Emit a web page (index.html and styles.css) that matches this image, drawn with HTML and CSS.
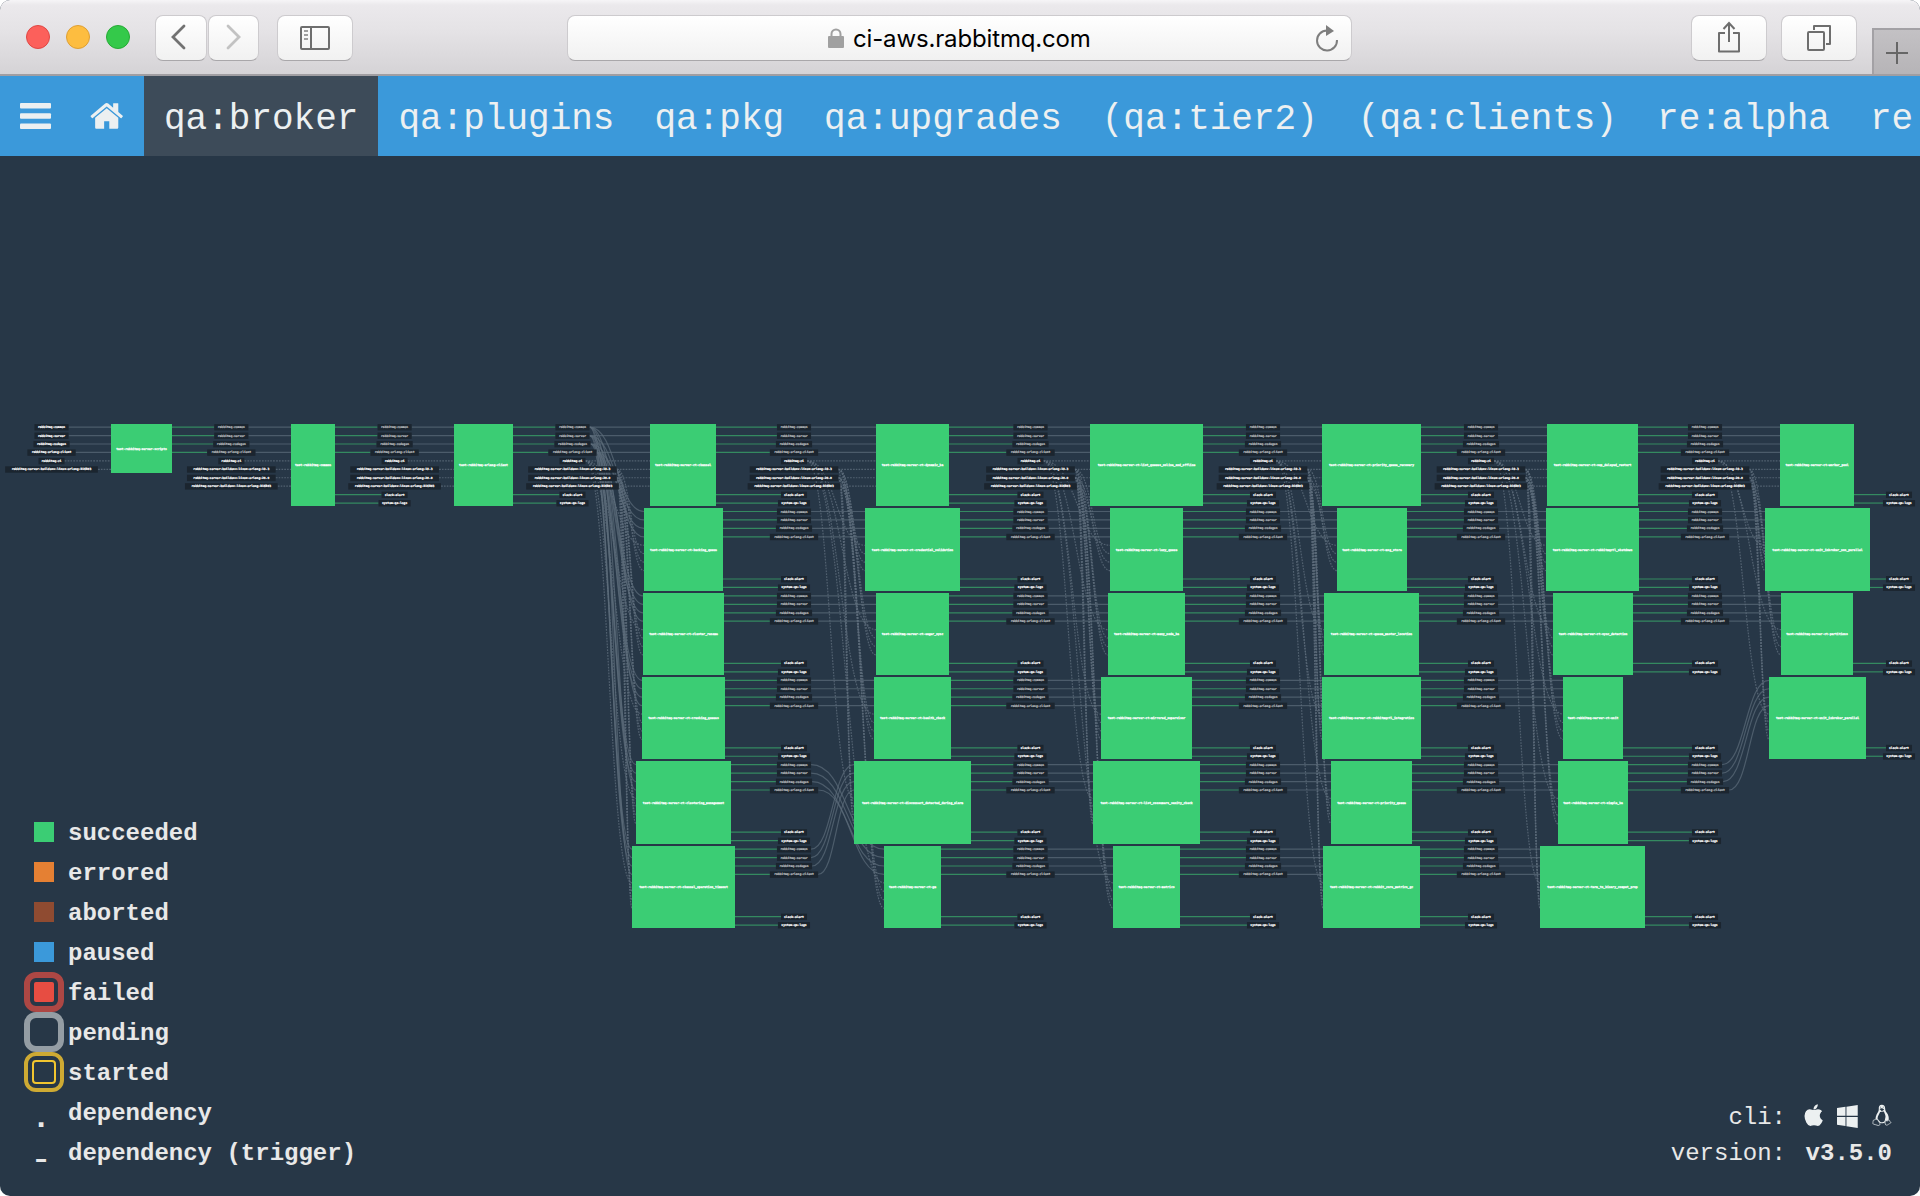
FILE: index.html
```html
<!DOCTYPE html>
<html lang="en">
<head>
<meta charset="utf-8">
<title>qa:broker - Concourse</title>
<link rel="stylesheet" href="styles.css">
</head>
<body>
<div class="window">
  <header class="toolbar">
    <div class="lights"><span class="light close"></span><span class="light minimize"></span><span class="light zoom"></span></div>
    <div class="history">
      <div class="button back"><svg width="16" height="26" viewBox="0 0 16 26"><path d="M14 2 3 13l11 11" fill="none" stroke="#727272" stroke-width="2.8" stroke-linecap="round"/></svg></div>
      <div class="button forward"><svg width="16" height="26" viewBox="0 0 16 26"><path d="m2 2 11 11L2 24" fill="none" stroke="#c2c2c2" stroke-width="2.8" stroke-linecap="round"/></svg></div>
    </div>
    <div class="button sidebar"><svg width="30" height="24" viewBox="0 0 30 24" fill="none" stroke="#6e6e6e" stroke-width="2"><rect x="1" y="1" width="28" height="22" rx="1"/><path d="M11 1v22"/><path d="M4 5h4M4 9h4M4 13h4" stroke="#a0a0a0"/></svg></div>
    <div class="button address">
      <svg class="lock" width="16" height="20" viewBox="0 0 16 20"><path d="M3.500 9V6a4.500 4.500 0 0 1 9 0v3" fill="none" stroke="#a0a0a0" stroke-width="2"/><rect x="0" y="8" width="16" height="12" rx="1" fill="#a0a0a0"/></svg>
      <span class="url">ci-aws.rabbitmq.com</span>
      <svg class="reload" width="24" height="28" viewBox="0 0 24 28"><path d="M12 6.500a10 10 0 1 0 10 9.500" fill="none" stroke="#7e7e7e" stroke-width="2"/><path d="m11 1 8 6-8 5z" fill="#7e7e7e"/></svg>
    </div>
    <div class="button share"><svg width="24" height="32" viewBox="0 0 24 32" fill="none" stroke="#6e6e6e" stroke-width="2"><path d="M8 12H2v18.500h20V12h-6" stroke-linejoin="round"/><path d="M12 21V2M6.500 8 12 2l5.500 6"/></svg></div>
    <div class="button tabs"><svg width="26" height="26" viewBox="0 0 26 26" fill="none" stroke="#6e6e6e" stroke-width="2"><rect x="2" y="7" width="16" height="18" rx="1"/><path d="M8 5V1h16v18h-4" stroke-linejoin="round"/></svg></div>
    <div class="new-tab"><svg width="22" height="22" viewBox="0 0 22 22" stroke="#666" stroke-width="2"><path d="M11 0v22M0 11h22"/></svg></div>
  </header>
  <nav class="groups">
    <a class="icon-link"><svg width="32" height="26" viewBox="0 0 32 26" fill="#ecf0f1"><rect width="31" height="5.500" rx="1"/><rect y="10.300" width="31" height="5.500" rx="1"/><rect y="20.500" width="31" height="5.500" rx="1"/></svg></a>
    <a class="icon-link"><svg class="home" width="36" height="36" viewBox="0 0 1792 1792" fill="#ecf0f1"><path d="M1408 992v480q0 26-19 45t-45 19h-384v-384h-256v384h-384q-26 0-45-19t-19-45v-480q0-1 .5-3t.5-3l575-474 575 474q1 2 1 6zm223-69l-62 74q-8 9-21 11h-3q-13 0-21-7l-692-577-692 577q-12 8-24 7-13-2-21-11l-62-74q-8-10-7-23.500t11-21.500l719-599q32-26 76-26t76 26l244 204v-195q0-14 9-23t23-9h192q14 0 23 9t9 23v408l219 182q10 8 11 21.500t-7 23.500z"/></svg></a>
    <a class="group active">qa:broker</a>
    <a class="group">qa:plugins</a>
    <a class="group">qa:pkg</a>
    <a class="group">qa:upgrades</a>
    <a class="group">(qa:tier2)</a>
    <a class="group">(qa:clients)</a>
    <a class="group">re:alpha</a>
    <a class="group">re</a>
  </nav>
  <main class="pipeline">
    <svg class="graph" id="graph" width="1920" height="1040" viewBox="0 156 1920 1040"></svg>
    <ul class="legend">
      <li><span class="key"><i class="swatch succeeded"></i></span><span class="term">succeeded</span></li>
      <li><span class="key"><i class="swatch errored"></i></span><span class="term">errored</span></li>
      <li><span class="key"><i class="swatch aborted"></i></span><span class="term">aborted</span></li>
      <li><span class="key"><i class="swatch paused"></i></span><span class="term">paused</span></li>
      <li><span class="key ring failed-ring"><i class="swatch failed"></i></span><span class="term">failed</span></li>
      <li><span class="key ring pending-ring"></span><span class="term">pending</span></li>
      <li><span class="key ring started-ring"><i class="started"></i></span><span class="term">started</span></li>
      <li><span class="key mark dot">.</span><span class="term">dependency</span></li>
      <li><span class="key mark dash">-</span><span class="term">dependency (trigger)</span></li>
    </ul>
    <dl class="info">
      <dt>cli:</dt>
      <dd class="platforms">
        <svg width="26" height="26" viewBox="0 0 1792 1792" fill="#ecf0f1"><path d="M1585 1215q-39 125-123 250-129 196-257 196-49 0-140-32-86-32-151-32-61 0-142 33-81 34-132 34-152 0-301-259-147-261-147-503 0-228 113-374 113-144 284-144 72 0 177 30 104 30 138 30 45 0 143-34 102-34 173-34 119 0 213 65 52 36 104 100-79 67-114 118-65 94-65 207 0 124 69 223t158 126zm-376-1173q0 61-29 136-30 75-93 138-54 54-108 72-37 11-104 17 3-149 78-257 74-107 250-148 1 3 2.500 11t2.500 11q0 4 .5 10t.5 10z"/></svg>
        <svg class="windows" width="23" height="23" viewBox="64 136 1664 1664" preserveAspectRatio="none" fill="#ecf0f1"><path d="M746 1006v651l-682-94v-557h682zm0-743v659h-682v-565zm982 743v786l-907-125v-661h907zm0-870v786h-907v-661z"/></svg>
        <svg class="linux" width="22" height="25" viewBox="0 0 22 25"><path d="M11 .7C8 .7 7.400 2.600 7.500 5.500c.1 2.300-1.400 3.800-2.400 6-.7 1.800-1.200 3.500-1.100 5L8 20c1.500 1.600 5 1.600 6.500 0l4-2.500c.5-3-.4-5.600-1.900-7.800-1.300-1.800-2-2.700-2-5C14.500 2 13.400.7 11 .7z" fill="#ecf0f1"/><path d="M9 8.500c-1.200 2.800-3 5-2.800 7.500L9 19.500c1.600 1 3.600.7 5-.5l1-5c0-2.300-1.200-4.600-2-6z" fill="#273747"/><path d="M8.800 5.400 11 4.800l2.200 1.100-2.400 1.500zM9 3.300h1M12 3.300h1" fill="#273747" stroke="#273747" stroke-width=".7"/><path d="M4.300 16.500c-.7 1.300-3.300.5-3.100 2.200.2 1.200-.8 2.700.2 3.300 1.600.4 4.200 1.200 5.500 1.600 1.500.2 2.400-1.200 1.800-2.500-1.200-1.500-2.500-4.900-4.400-4.600zM15 17.500c-.3 2-.9 4.400.2 5.400 1.500 1 2.900-.7 4.200-1.300 1-.5 2.300-.9 1-2-1-.7-.5-1.800-1.600-2.300-1.200 1.700-2.900 1.500-3.800.2z" fill="#273747" stroke="#ecf0f1" stroke-width=".8"/></svg>
      </dd>
      <dt>version:</dt>
      <dd class="version">v3.5.0</dd>
    </dl>
  </main>
</div>
<script src="graph.js"></script>
</body>
</html>
```
FILE: styles.css
```css
* { box-sizing: border-box; }
body { margin: 0; background: #fff; overflow: hidden; }
.window { width: 1920px; height: 1196px; display: flex; flex-direction: column; border-radius: 10px; overflow: hidden; background: #273747; }

.toolbar { flex: none; height: 76px; display: flex; padding-top: 15px; border-bottom: 2px solid #a09ea2; background: linear-gradient(#f6f5f7 0, #ebe9ec 5px, #e5e3e6 30px, #d5d3d6 74px); }
.lights { display: flex; gap: 16px; margin: 10px 25px 0 26px; }
.light { width: 24px; height: 24px; border-radius: 50%; border: 1px solid; }
.close { background: #fc605b; border-color: #df4744; }
.minimize { background: #fdbd40; border-color: #de9f34; }
.zoom { background: #34c94a; border-color: #27aa35; }
.history { display: flex; gap: 1px; }
.button { height: 46px; border: 1px solid #cdcbce; border-bottom-color: #a9a7aa; border-radius: 8px; background: linear-gradient(#fff, #f1f1f1); display: flex; align-items: center; justify-content: center; }
.back { width: 52px; padding-right: 6px; }
.forward { width: 51px; }
.back svg, .forward svg { margin-bottom: 2px; }
.sidebar { width: 76px; margin-left: 18px; }
.share { width: 76px; margin-left: 339px; padding-right: 1px; }
.share svg { margin-bottom: 2px; }
.tabs { width: 76px; margin-left: 14px; padding-right: 1px; }
.address { width: 785px; margin-left: 214px; }
.lock { margin: 0 9px 0 260px; }
.url { flex: 1; font: 24px/46px Inter, sans-serif; letter-spacing: -0.15px; padding-top: 2px; color: #000; }
.reload { margin: 0 12px 1px 0; }
.new-tab { margin: 13px 0 0 15px; flex: 1; border: solid #a3a1a5; border-width: 2px 0 0 2px; background: linear-gradient(#c3c1c4, #b6b4b7); display: flex; padding: 12px 0 0 12px; }

.groups { flex: none; height: 80px; display: flex; overflow: hidden; background: #3b99da; color: #ecf0f1; font: 36px/88px "Liberation Mono", monospace; }
.icon-link { width: 72px; flex: none; display: flex; align-items: center; padding-left: 20px; }
.icon-link .home { margin-left: -2px; }
.icon-link svg { flex: none; }
.group { flex: none; padding: 0 20px; white-space: nowrap; }
.active { background: #3d4b59; }

.pipeline { flex: 1; position: relative; }
.graph { display: block; font-family: "DejaVu Sans Mono", monospace; font-size: 3px; font-weight: bold; text-anchor: middle; text-rendering: geometricPrecision; }
.job { fill: #3bcd74; }
.job-name { fill: #fff; stroke: #fff; stroke-width: .25; }
.resource { fill: #1b252f; }
.resource-name { fill: #fff; stroke: #fff; stroke-width: .2; }
.resource-name.passed { fill: #b4b8bb; stroke: #b4b8bb; }
.edge { fill: none; stroke: #5c6c7b; stroke-opacity: .7; stroke-width: 1.2; }
.trigger { stroke-dasharray: 1.7 1.200; stroke-opacity: .8; }
.output { fill: none; stroke: #348a60; stroke-width: 1.2; }

.legend { position: absolute; left: 24px; bottom: 24px; margin: 0; padding: 0; list-style: none; color: #e8e8e8; font: bold 24px/40px "Liberation Mono", monospace; }
.legend li { height: 40px; display: flex; gap: 4px; }
.term { padding-top: 2px; }
.key { width: 40px; height: 40px; display: flex; align-items: center; justify-content: center; }
.swatch { width: 20px; height: 20px; }
.succeeded { background: #3bcd74; }
.errored { background: #e58033; }
.aborted { background: #8f4b31; }
.paused { background: #3b99da; }
.failed { background: #e74d42; border-radius: 2px; }
.ring { border: 6px solid; border-radius: 12px; }
.failed-ring { border-color: #ad4744; }
.pending-ring { border-color: #949da4; }
.started-ring { border: 4px solid #ceaa33; }
.started { width: 24px; height: 24px; border: 2px solid #f1c52f; border-radius: 4px; }
.mark { padding-right: 6px; }
.dot { padding-top: 14px; font-size: 32px; }
.dash { padding-top: 17px; font-size: 36px; font-weight: normal; }

.info { position: absolute; right: 28px; bottom: 24px; margin: 0; display: grid; grid-template-columns: auto 90px; column-gap: 16px; color: #e8e8e8; font: 24px/36px "Liberation Mono", monospace; text-align: right; }
.info dd { margin: 0; }
.platforms { display: flex; align-items: center; justify-content: flex-end; padding-bottom: 5px; }
.windows { margin: 2px 14px 0 12px; }
.version { font-weight: bold; }
```
FILE: graph.js
```js
const TOP = 424;
const ROW = 84.4;
const PIN = 8.44;
const JOB = 'test-rabbitmq-server-ct-';
const RESOURCES = [
  'rabbitmq-common', 'rabbitmq-server', 'rabbitmq-codegen', 'rabbitmq-erlang-client',
  'rabbitmq-ci', 'rabbitmq-server-buildenv-linux-erlang-19.3',
  'rabbitmq-server-buildenv-linux-erlang-20.0', 'rabbitmq-server-buildenv-linux-erlang-R16B03',
  'slack-alert', 'system-qa-logs'
];

// Each column: jobs as [name, left, right], then the centre of the resource labels after it.
const columns = [
  { jobs: [], labels: 51.5 },
  { jobs: [['test-rabbitmq-server-scripts', 111, 172]], labels: 231.3 },
  { jobs: [['test-rabbitmq-common', 291, 335]], labels: 394.6 },
  { jobs: [['test-rabbitmq-erlang-client', 454, 513]], labels: 572.5 },
  { jobs: [[JOB + 'channel', 650, 716], [JOB + 'backing_queue', 644, 723], [JOB + 'cluster_rename', 643, 724], [JOB + 'crashing_queues', 642, 725], [JOB + 'clustering_management', 636, 731], [JOB + 'channel_operation_timeout', 632, 735]], labels: 794 },
  { jobs: [[JOB + 'dynamic_ha', 876, 949], [JOB + 'credential_validation', 865, 960], [JOB + 'eager_sync', 876, 949], [JOB + 'health_check', 874, 951], [JOB + 'disconnect_detected_during_alarm', 854, 971], [JOB + 'gm', 884, 941]], labels: 1030.5 },
  { jobs: [[JOB + 'list_queues_online_and_offline', 1090, 1203], [JOB + 'lazy_queue', 1110, 1183], [JOB + 'many_node_ha', 1108, 1185], [JOB + 'mirrored_supervisor', 1101, 1192], [JOB + 'list_consumers_sanity_check', 1093, 1200], [JOB + 'metrics', 1113, 1180]], labels: 1263 },
  { jobs: [[JOB + 'priority_queue_recovery', 1322, 1421], [JOB + 'msg_store', 1337, 1407], [JOB + 'queue_master_location', 1324, 1419], [JOB + 'rabbitmqctl_integration', 1322, 1421], [JOB + 'priority_queue', 1331, 1412], [JOB + 'rabbit_core_metrics_gc', 1323, 1420]], labels: 1481 },
  { jobs: [[JOB + 'sup_delayed_restart', 1547, 1638], [JOB + 'rabbitmqctl_shutdown', 1546, 1639], [JOB + 'sync_detection', 1553, 1633], [JOB + 'unit', 1563, 1623], [JOB + 'simple_ha', 1558, 1628], [JOB + 'term_to_binary_compat_prop', 1540, 1645]], labels: 1705 },
  { jobs: [[JOB + 'worker_pool', 1780, 1854], [JOB + 'unit_inbroker_non_parallel', 1765, 1870], [JOB + 'partitions', 1781, 1853], [JOB + 'unit_inbroker_parallel', 1769, 1866]], labels: 1899 }
];

const edges = [];
const nodes = [];
const pinY = (row, pin) => TOP + 3.1 + row * ROW + pin * PIN;
const labelWidth = name => name.length * 2.02 + 3.8;

function addLabel(cx, row, pin, passed, name = RESOURCES[pin]) {
  const y = pinY(row, pin);
  const w = labelWidth(name);
  nodes.push(`<rect class="resource" x="${cx - w / 2}" y="${y - 3}" width="${w}" height="6.400"/>`,
    `<text class="resource-name${passed ? ' passed' : ''}" x="${cx}" y="${y + 1}">${name}</text>`);
}

function addEdge(x1, y1, x2, y2, trigger) {
  const mid = (x1 + x2) / 2;
  edges.push(`<path class="edge${trigger ? ' trigger' : ''}" d="M${x1} ${y1}C${mid} ${y1} ${mid} ${y2} ${x2} ${y2}"/>`);
}

// Row of the next column that the resources of a job pass on to.
function nextRow(col, row) {
  if (col === 4 && row > 3) return 9 - row;
  if (col === 8 && row > 2) return row === 4 ? 3 : -1;
  return col === 9 ? -1 : row;
}

columns.forEach((column, c) => {
  column.jobs.forEach(([name, left, right], r) => {
    const y = Math.round(TOP - 0.2 + r * ROW);
    const h = c === 1 ? 49 : Math.round(TOP + 82.100 + r * ROW) - y;
    nodes.push(`<rect class="job" x="${left}" y="${y}" width="${right - left}" height="${h}"/>`,
      `<text class="job-name" x="${(left + right) / 2}" y="${y + h / 2 + 1}">${name}</text>`);
    RESOURCES.forEach((res, p) => {
      const produced = p < 4 ? c === 8 ? nextRow(c, r) >= 0 : c < 9 : p > 7 && c > 1;
      if (!produced) return;
      edges.push(`<path class="output" d="M${right} ${pinY(r, p)}H${column.labels - labelWidth(res) / 2}"/>`);
      addLabel(column.labels, r, p, p < 4);
    });
  });

  const next = columns[c + 1];
  if (!next) return;

  if (c === 0) {
    const inputs = [...RESOURCES.slice(0, 5), RESOURCES[7]];
    inputs.forEach((res, p) => {
      addLabel(column.labels, 0, p, false, res);
      addEdge(column.labels + labelWidth(res) / 2, pinY(0, p), next.jobs[0][1], pinY(0, p), p > 3);
    });
    return;
  }

  for (let p = 4; p < 8; p++) {
    addLabel(column.labels, 0, p, false);
    next.jobs.forEach((job, r) =>
      addEdge(column.labels + labelWidth(RESOURCES[p]) / 2, pinY(0, p), job[1], pinY(r, p), true));
  }
  for (let p = 0; p < 4; p++) {
    const x = column.labels + labelWidth(RESOURCES[p]) / 2;
    if (c === 3) {
      next.jobs.forEach((job, r) => addEdge(x, pinY(0, p), job[1], pinY(r, p), false));
    } else {
      column.jobs.forEach((job, r) => {
        const target = nextRow(c, r);
        if (target >= 0) addEdge(x, pinY(r, p), next.jobs[target][1], pinY(target, p), false);
      });
    }
  }
});

document.getElementById('graph').innerHTML = edges.join('') + nodes.join('');
```
